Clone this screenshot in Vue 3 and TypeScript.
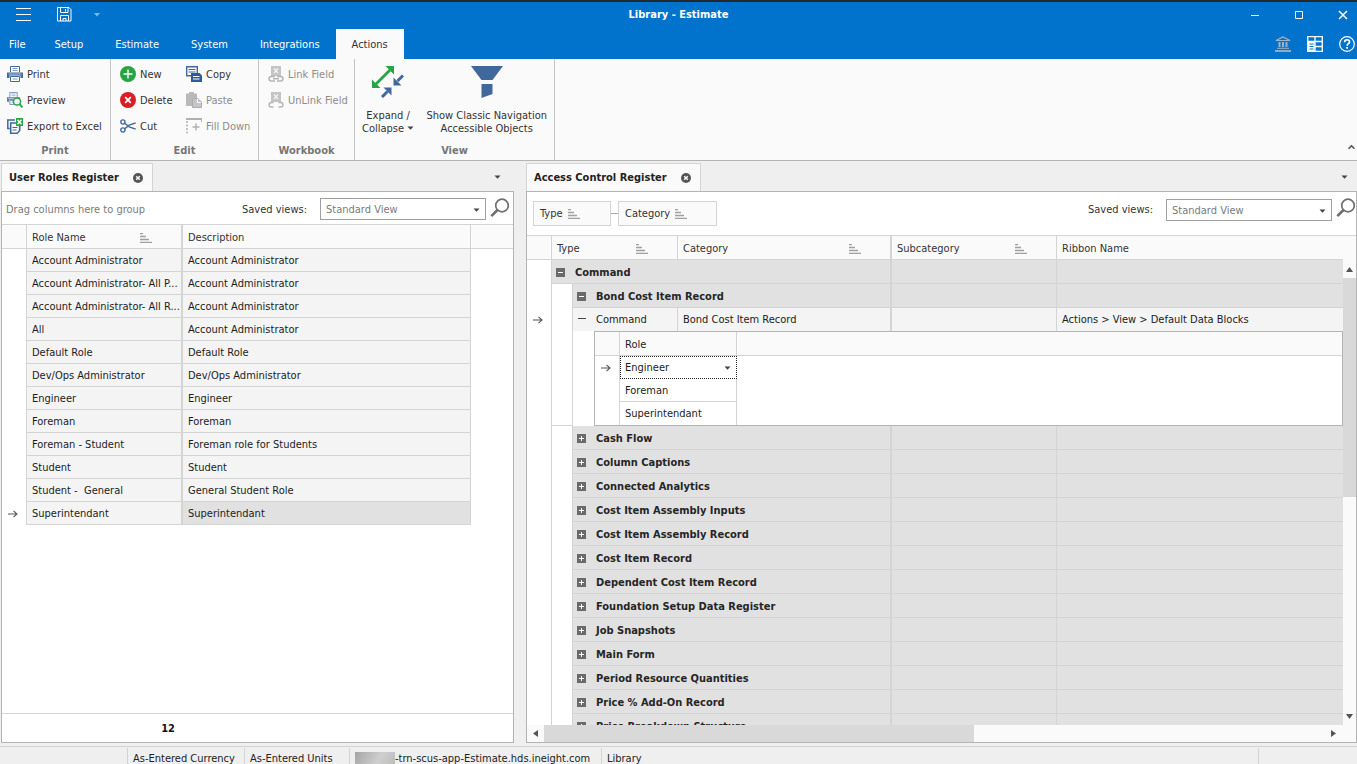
<script setup lang="ts">
import { ref } from 'vue'

interface Role {
  name: string
  description: string
}

const menuTabs: string[] = ['File', 'Setup', 'Estimate', 'System', 'Integrations', 'Actions']
const activeTab = ref('Actions')

const roles: Role[] = [
  { name: 'Account Administrator', description: 'Account Administrator' },
  { name: 'Account Administrator- All P...', description: 'Account Administrator' },
  { name: 'Account Administrator- All R...', description: 'Account Administrator' },
  { name: 'All', description: 'Account Administrator' },
  { name: 'Default Role', description: 'Default Role' },
  { name: 'Dev/Ops Administrator', description: 'Dev/Ops Administrator' },
  { name: 'Engineer', description: 'Engineer' },
  { name: 'Foreman', description: 'Foreman' },
  { name: 'Foreman - Student', description: 'Foreman role for Students' },
  { name: 'Student', description: 'Student' },
  { name: 'Student -  General', description: 'General Student Role' },
  { name: 'Superintendant', description: 'Superintendant' },
]
const selectedRole = ref('Superintendant')

const assignedRole = ref('Engineer')
const otherRoles: string[] = ['Foreman', 'Superintendant']

const categories: string[] = [
  'Cash Flow',
  'Column Captions',
  'Connected Analytics',
  'Cost Item Assembly Inputs',
  'Cost Item Assembly Record',
  'Cost Item Record',
  'Dependent Cost Item Record',
  'Foundation Setup Data Register',
  'Job Snapshots',
  'Main Form',
  'Period Resource Quantities',
  'Price % Add-On Record',
  'Price Breakdown Structure',
]
</script>

<template>
  <div class="app">
    <svg class="sprite" aria-hidden="true">
      <symbol id="caret" viewBox="0 0 7 4"><path d="M0.5 0.5h6L3.5 3.8z" fill="#444" /></symbol>
      <symbol id="sort" viewBox="0 0 12 10">
        <path d="M0 .5h3M0 3.5h6M0 6.5h9M0 9.5h12" stroke="#a0a0a0" stroke-width="1.4" fill="none" />
      </symbol>
      <symbol id="arrow" viewBox="0 0 10 8">
        <path d="M0 4h9M5.5 .8L9 4 5.5 7.2" stroke="#555" stroke-width="1.1" fill="none" />
      </symbol>
      <symbol id="close" viewBox="0 0 10 10">
        <circle cx="5" cy="5" r="5" fill="#555" />
        <path d="M3.2 3.2l3.6 3.6M6.8 3.2L3.2 6.8" stroke="#fff" stroke-width="1.4" />
      </symbol>
      <symbol id="find" viewBox="0 0 20 20">
        <circle cx="12" cy="7.5" r="6.3" fill="none" stroke="#6f6f6f" stroke-width="1.7" />
        <path d="M7.5 12L1.3 18.2" stroke="#6f6f6f" stroke-width="2.6" />
      </symbol>
      <symbol id="minus" viewBox="0 0 9 9">
        <rect width="9" height="9" fill="#6a6a6a" />
        <path d="M2 4.5h5" stroke="#fff" />
      </symbol>
      <symbol id="plus" viewBox="0 0 9 9">
        <rect width="9" height="9" fill="#6a6a6a" />
        <path d="M2 4.5h5M4.5 2v5" stroke="#fff" />
      </symbol>
      <symbol id="printer" viewBox="0 0 16 16">
        <path d="M3.500 6V.500h9V6" fill="#fff" stroke="#41689c" />
        <path d="M5.500 2.500h5M5.500 4.500h5" stroke="#7f9bc0" />
        <path d="M0 6.500h16v5.500h-2.500V9.500h-11V12H0z" fill="#41689c" />
        <path d="M1.500 8h13" stroke="#b5c6dc" />
        <path d="M3.500 10.500h9v5h-9z" fill="#fff" stroke="#41689c" />
        <path d="M5.500 13h5" stroke="#7f9bc0" />
      </symbol>
      <symbol id="field" viewBox="0 0 16 16">
        <path d="M3 0h10v10H3z" fill="#c4c4c4" />
        <path d="M6 2.5l4 4.5M10 2.5L6 7" stroke="#f4f4f4" stroke-width="1.3" />
      </symbol>
    </svg>

    <header class="top">
      <div class="titlebar">
        <div class="quick">
          <button class="bare" aria-label="Menu">
            <svg width="15" height="14" viewBox="0 0 15 14"><path d="M0 .5h15M0 6.500h15M0 12.500h15" stroke="#fff" /></svg>
          </button>
          <button class="bare save" aria-label="Save">
            <svg width="15" height="15" viewBox="0 0 15 15" fill="none" stroke="#fff">
              <path d="M.5.5h11.500l2 2v11.500H.5zM3.500.5v5h7.500v-5M8.500 2v2.500M3.500 14V8.500h8V14M6 14v-2.500h3V14" />
            </svg>
          </button>
          <button class="bare" aria-label="Customize">
            <svg width="6" height="4" viewBox="0 0 6 4"><path d="M0 0h6L3 3.5z" fill="#7fb8e4" /></svg>
          </button>
        </div>
        <h1>Library - Estimate</h1>
        <div class="window-buttons">
          <button class="bare" aria-label="Minimize"><svg width="10" height="10"><path d="M1 5.5h8" stroke="#fff" /></svg></button>
          <button class="bare" aria-label="Maximize"><svg width="10" height="10"><path d="M1.5 1.5h7v7h-7z" fill="none" stroke="#fff" /></svg></button>
          <button class="bare" aria-label="Close"><svg width="10" height="10"><path d="M1 1l8 8M9 1L1 9" stroke="#fff" stroke-width="1.5" /></svg></button>
        </div>
      </div>
      <div class="menubar">
        <nav class="menu">
          <button v-for="t in menuTabs" :key="t" class="menu-tab" :class="{ active: t === activeTab }" @click="activeTab = t">{{ t }}</button>
        </nav>
        <div class="menu-icons">
          <button class="bare" aria-label="Library">
            <svg width="16" height="16" viewBox="0 0 16 16">
              <path d="M8 .9L1 4.5h14z" fill="none" stroke="#9db4c6" stroke-width="1.2" />
              <path d="M4.5 6v5M8 6v5M11.5 6v5" stroke="#9db4c6" stroke-width="2" />
              <path d="M2 12.3h12" stroke="#9db4c6" /><path d="M0 15h16" stroke="#9db4c6" stroke-width="1.8" />
            </svg>
          </button>
          <button class="bare" aria-label="Grid">
            <svg width="16" height="16" viewBox="0 0 16 16">
              <path d="M.7.7h14.6v14.6H.7zM.7 5.5h14.6M.7 10.5h14.6M8 .7v14.6" fill="none" stroke="#fff" stroke-width="1.3" />
              <path d="M1 5h6.5v10.5H1z" fill="#fff" /><path d="M2.500 8h4M2.500 10.500h4M2.500 13h4" stroke="#0173cc" stroke-width="1.2" />
            </svg>
          </button>
          <button class="bare" aria-label="Help">
            <svg width="16" height="16" viewBox="0 0 16 16" fill="none" stroke="#fff">
              <circle cx="8" cy="8" r="7.3" stroke-width="1.2" />
              <path d="M5.6 6.2c0-3.2 4.9-3.2 4.9-.3 0 1.7-2.4 1.7-2.4 3.9" stroke-width="1.7" /><path d="M8.1 11v1.800" stroke-width="1.8" />
            </svg>
          </button>
        </div>
      </div>
    </header>

    <section class="ribbon">
      <div class="group print">
        <div class="columns">
          <div class="stack">
            <button class="cmd"><svg width="16" height="16"><use href="#printer" /></svg>Print</button>
            <button class="cmd">
              <svg width="16" height="16" viewBox="0 0 16 16">
                <g opacity=".85"><use href="#printer" width="13" height="13" /></g>
                <circle cx="10" cy="9.5" r="3.6" fill="#e9f3fb" stroke="#27a544" stroke-width="1.5" />
                <path d="M12.5 12.2l3 3.2" stroke="#27a544" stroke-width="1.8" />
              </svg>Preview
            </button>
            <button class="cmd">
              <svg width="16" height="16" viewBox="0 0 16 16">
                <path d="M8 2H.8v8.500h2" fill="none" stroke="#41689c" stroke-width="1.5" />
                <path d="M3.7 5h9v7.500l-2.500 2.700H3.700z" fill="#fff" stroke="#41689c" stroke-width="1.6" />
                <path d="M5.5 9.500h5M5.5 12h4" stroke="#41689c" />
                <path d="M9 0h7v8H9z" fill="#27a544" /><path d="M10.500 1.800l4 4.500M14.500 1.800l-4 4.500" stroke="#fff" stroke-width="1.3" />
              </svg>Export to Excel
            </button>
          </div>
        </div>
        <h2>Print</h2>
      </div>

      <div class="group edit">
        <div class="columns">
          <div class="stack first">
            <button class="cmd"><svg width="16" height="16" viewBox="0 0 16 16"><circle cx="8" cy="8" r="8" fill="#27a544" /><path d="M8 3.5v9M3.5 8h9" stroke="#fff" stroke-width="1.4" /></svg>New</button>
            <button class="cmd"><svg width="16" height="16" viewBox="0 0 16 16"><circle cx="8" cy="8" r="8" fill="#d91e27" /><path d="M5.2 5.2l5.6 5.6M10.8 5.2l-5.6 5.6" stroke="#fff" stroke-width="1.7" /></svg>Delete</button>
            <button class="cmd">
              <svg width="16" height="16" viewBox="0 0 16 16" fill="none" stroke="#41689c" stroke-width="1.4">
                <circle cx="2.900" cy="4" r="2.100" /><circle cx="2.900" cy="12" r="2.100" />
                <path d="M4.700 5.200l4.500 3.600 6.500 2.400M4.700 10.800l4.500-3.600 6.500-2.400" />
              </svg>Cut
            </button>
          </div>
          <div class="stack">
            <button class="cmd">
              <svg width="16" height="16" viewBox="0 0 16 16">
                <path d="M.7.7h10.600v9.100H.7z" fill="#fff" stroke="#41689c" stroke-width="1.4" />
                <path d="M2.5 3.5h7M2.5 6h7" stroke="#41689c" />
                <path d="M5 7h8.500l2.500 2.500V16H5z" fill="#2f5c98" /><path d="M7 10.5h6.500M7 13h6.500" stroke="#fff" />
              </svg>Copy
            </button>
            <button class="cmd" disabled>
              <svg width="16" height="16" viewBox="0 0 16 16">
                <path d="M0 1.500h3V0h5v1.500h3V6H6v8H0z" fill="#b9b9b9" />
                <path d="M6.500 6.500h5l4 3.500v5.500h-9z" fill="#c6c6c6" stroke="#aaa" /><path d="M11.500 7v3.500H15" stroke="#fff" fill="none" />
              </svg>Paste
            </button>
            <button class="cmd" disabled>
              <svg width="16" height="16" viewBox="0 0 16 16">
                <path d="M0 1h16" stroke="#b0b0b0" stroke-width="2" /><path d="M1 3v13" stroke="#b0b0b0" stroke-width="1.5" stroke-dasharray="2 1.5" />
                <path d="M10 5.500v7M6.500 9h7" stroke="#b0b0b0" stroke-width="1.4" /><path d="M15.500 1v3" stroke="#b0b0b0" />
              </svg>Fill Down
            </button>
          </div>
        </div>
        <h2>Edit</h2>
      </div>

      <div class="group workbook">
        <div class="columns">
          <div class="stack">
            <button class="cmd" disabled>
              <svg width="16" height="16" viewBox="0 0 16 16">
                <use href="#field" />
                <path d="M7 10.500H3.300a2.200 2.200 0 000 4.500H7M9 10.500h3.700a2.200 2.200 0 010 4.500H9M5 12.800h6" fill="none" stroke="#b4b4b4" stroke-width="1.5" />
              </svg>Link Field
            </button>
            <button class="cmd" disabled>
              <svg width="16" height="16" viewBox="0 0 16 16">
                <use href="#field" />
                <path d="M5.500 10.500H3.300a2.200 2.200 0 000 4.500h2.200M10.500 10.500h2.200a2.200 2.200 0 010 4.500h-2.200" fill="none" stroke="#b4b4b4" stroke-width="1.5" />
              </svg>UnLink Field
            </button>
          </div>
        </div>
        <h2>Workbook</h2>
      </div>

      <div class="group view">
        <div class="columns">
          <button class="big">
            <svg width="32" height="32" viewBox="0 0 32 32">
              <path d="M4 18L18 4" stroke="#27a544" stroke-width="2.8" />
              <path d="M22 0v8.500L13.500 0zM0 22v-8.500L8.500 22z" fill="#27a544" />
              <path d="M31 9.500l-5.500 5.500M10 31l5.500-5.500" stroke="#41689c" stroke-width="3" />
              <path d="M21.500 11.500v8h8zM19.500 21.500h-8l8 8z" fill="#41689c" />
            </svg>
            <span>Expand /<br />Collapse <svg class="caret" width="7" height="4"><use href="#caret" /></svg></span>
          </button>
          <button class="big">
            <svg width="32" height="32" viewBox="0 0 32 32">
              <path d="M0 0h32L21.500 14h-11zM10.500 18h11v10l-11 4z" fill="#41689c" />
            </svg>
            <span>Show Classic Navigation<br />Accessible Objects</span>
          </button>
        </div>
        <h2>View</h2>
      </div>
      <button class="bare collapse" aria-label="Collapse ribbon"><svg width="7" height="4" viewBox="0 0 7 4"><path d="M.5 3.800L3.500.700l3 3.100" fill="none" stroke="#555" stroke-width="1.5" /></svg></button>
    </section>

    <main class="workspace">
      <section class="pane">
        <div class="tabstrip">
          <div class="doc-tab">
            <h2>User Roles Register</h2>
            <button class="bare" aria-label="Close tab"><svg width="10" height="10"><use href="#close" /></svg></button>
          </div>
          <button class="bare strip-menu" aria-label="Tabs"><svg width="7" height="4"><use href="#caret" /></svg></button>
        </div>
        <div class="panel">
          <div class="toolbar">
            <span class="hint">Drag columns here to group</span>
            <label for="roles-view">Saved views:</label>
            <div class="combo">
              <select id="roles-view"><option>Standard View</option></select>
              <svg class="combo-caret" width="7" height="4"><use href="#caret" /></svg>
            </div>
            <button class="bare find" aria-label="Search roles"><svg width="20" height="20"><use href="#find" /></svg></button>
          </div>
          <div class="grid-body">
            <table class="roles">
              <colgroup><col class="c-ind" /><col class="c-name" /><col class="c-desc" /><col /></colgroup>
              <thead>
                <tr>
                  <th></th>
                  <th class="divide"><span class="head">Role Name<svg width="12" height="10"><use href="#sort" /></svg></span></th>
                  <th>Description</th>
                  <th class="last"></th>
                </tr>
              </thead>
              <tbody>
                <tr v-for="r in roles" :key="r.name" :class="{ selected: r.name === selectedRole }" @click="selectedRole = r.name">
                  <td class="ind"><svg v-if="r.name === selectedRole" width="10" height="8"><use href="#arrow" /></svg></td>
                  <td class="divide">{{ r.name }}</td>
                  <td class="desc">{{ r.description }}</td>
                  <td class="void"></td>
                </tr>
              </tbody>
            </table>
          </div>
          <footer class="summary"><strong>{{ roles.length }}</strong></footer>
        </div>
      </section>

      <section class="pane">
        <div class="tabstrip">
          <div class="doc-tab">
            <h2>Access Control Register</h2>
            <button class="bare" aria-label="Close tab"><svg width="10" height="10"><use href="#close" /></svg></button>
          </div>
          <button class="bare strip-menu edge" aria-label="Tabs"><svg width="7" height="4"><use href="#caret" /></svg></button>
        </div>
        <div class="panel">
          <div class="toolbar tall">
            <div class="chips">
              <button class="chip">Type<svg width="12" height="10"><use href="#sort" /></svg></button>
              <span class="joint"></span>
              <button class="chip wide">Category<svg width="12" height="10"><use href="#sort" /></svg></button>
            </div>
            <label for="access-view">Saved views:</label>
            <div class="combo">
              <select id="access-view"><option>Standard View</option></select>
              <svg class="combo-caret" width="7" height="4"><use href="#caret" /></svg>
            </div>
            <button class="bare find" aria-label="Search access"><svg width="20" height="20"><use href="#find" /></svg></button>
          </div>
          <div class="access-area">
            <div class="grid-body">
              <table class="access">
                <colgroup><col class="c-ind" /><col class="c-indent" /><col class="c-type" /><col class="c-cat" /><col class="c-sub" /><col /></colgroup>
                <thead>
                  <tr>
                    <th></th>
                    <th colspan="2"><span class="head">Type<svg width="12" height="10"><use href="#sort" /></svg></span></th>
                    <th class="divide"><span class="head">Category<svg width="12" height="10"><use href="#sort" /></svg></span></th>
                    <th><span class="head">Subcategory<svg width="12" height="10"><use href="#sort" /></svg></span></th>
                    <th class="last">Ribbon Name</th>
                  </tr>
                </thead>
                <tbody>
                  <tr class="grp">
                    <td class="ind"></td>
                    <td colspan="3" class="divide tree"><button class="node" aria-label="Collapse"><svg width="9" height="9"><use href="#minus" /></svg></button><strong>Command</strong></td>
                    <td></td><td class="last"></td>
                  </tr>
                  <tr class="grp">
                    <td class="ind"></td><td class="indent"></td>
                    <td colspan="2" class="divide tree"><button class="node" aria-label="Collapse"><svg width="9" height="9"><use href="#minus" /></svg></button><strong>Bond Cost Item Record</strong></td>
                    <td></td><td class="last"></td>
                  </tr>
                  <tr class="record">
                    <td class="ind"><svg width="10" height="8"><use href="#arrow" /></svg></td><td class="indent"></td>
                    <td class="tree"><button class="node" aria-label="Collapse"><svg width="9" height="9"><path d="M1 3.500h8" stroke="#444" /></svg></button>Command</td>
                    <td class="divide">Bond Cost Item Record</td>
                    <td></td><td class="last">Actions &gt; View &gt; Default Data Blocks</td>
                  </tr>
                  <tr>
                    <td class="ind"></td><td class="indent end"></td>
                    <td colspan="4" class="detail">
                      <table class="inner">
                        <colgroup><col class="c-ind" /><col class="c-role" /><col /></colgroup>
                        <thead><tr><th></th><th>Role</th><th class="last"></th></tr></thead>
                        <tbody>
                          <tr>
                            <td class="ind"><svg width="10" height="8"><use href="#arrow" /></svg></td>
                            <td class="focus">
                              <div class="role-combo">
                                <select v-model="assignedRole" aria-label="Role"><option>Engineer</option><option>Foreman</option><option>Superintendant</option></select>
                                <svg class="combo-caret" width="7" height="4"><use href="#caret" /></svg>
                              </div>
                            </td>
                            <td class="void"></td>
                          </tr>
                          <tr v-for="r in otherRoles" :key="r"><td class="ind"></td><td>{{ r }}</td><td class="void"></td></tr>
                        </tbody>
                      </table>
                    </td>
                  </tr>
                  <tr v-for="c in categories" :key="c" class="grp">
                    <td class="ind"></td><td class="indent"></td>
                    <td colspan="2" class="divide tree"><button class="node" aria-label="Expand"><svg width="9" height="9"><use href="#plus" /></svg></button><strong>{{ c }}</strong></td>
                    <td></td><td class="last"></td>
                  </tr>
                </tbody>
              </table>
            </div>
            <div class="vbar">
              <svg width="7" height="5"><path d="M0 5h7L3.500 0z" fill="#555" /></svg>
              <div class="vtrack"><div class="vthumb"></div></div>
              <svg width="7" height="5"><path d="M0 0h7L3.500 5z" fill="#555" /></svg>
            </div>
          </div>
          <div class="hbar">
            <svg width="5" height="7"><path d="M5 0v7L0 3.500z" fill="#555" /></svg>
            <div class="htrack"><div class="hthumb"></div></div>
            <svg width="5" height="7"><path d="M0 0v7l5-3.500z" fill="#555" /></svg>
          </div>
        </div>
      </section>
    </main>

    <footer class="status">
      <span class="s-empty"></span>
      <span class="s-currency">As-Entered Currency</span>
      <span class="s-units">As-Entered Units</span>
      <span class="s-host"><i class="redacted"></i>-trn-scus-app-Estimate.hds.ineight.com</span>
      <span class="s-lib">Library</span>
      <span class="s-end"></span>
    </footer>
  </div>
</template>

<style>
html,
body {
  margin: 0;
  background: #efefef;
}
</style>

<style scoped>
.app {
  display: flex;
  flex-direction: column;
  height: 100vh;
  overflow: hidden;
  background: #efefef;
  color: #333;
  font: 11px/13px 'DejaVu Sans Condensed', 'Noto Sans', sans-serif;
}
.app * { box-sizing: border-box; }
.sprite { position: absolute; width: 0; height: 0; }
svg { display: block; flex: none; }
h1, h2 { margin: 0; font-size: 11px; line-height: 13px; font-weight: bold; }
button, select { font: inherit; color: inherit; }
button { white-space: nowrap; }
.bare { display: block; padding: 0; border: 0; background: none; }

.top { flex: none; background: #0173cc; border-top: 2px solid #202a33; color: #fff; }
.titlebar { display: grid; grid-template-columns: 1fr auto 1fr; align-items: center; height: 25px; }
.quick { display: flex; align-items: center; padding-left: 16px; }
.save { margin: 0 22px 0 26px; }
.window-buttons { display: flex; justify-content: flex-end; gap: 34px; padding-right: 9px; }
.menubar { display: flex; justify-content: space-between; height: 32px; }
.menu { display: flex; align-items: flex-end; }
.menu-tab { height: 30px; padding: 0 16px; border: 0; background: none; }
.menu-tab:first-child { padding: 0 13px 0 9px; }
.menu-tab.active { background: #fafafa; color: #333; }
.menu-icons { display: flex; align-items: center; gap: 16px; padding: 2px 2px 0 0; }

.ribbon { position: relative; display: flex; flex: none; height: 102px; background: #fafafa; border-bottom: 1px solid #b4b4b4; }
.group { display: flex; flex-direction: column; justify-content: space-between; border-right: 1px solid #c4c4c4; padding-bottom: 3px; }
.group h2 { text-align: center; color: #777; }
.columns { display: flex; padding: 2px 0 0 7px; }
.print { width: 111px; }
.edit { width: 148px; }
.workbook { width: 96px; }
.view { width: 200px; }
.edit .columns, .workbook .columns { padding-left: 9px; }
.view .columns { padding: 7px 4px 0; justify-content: space-between; }
.stack.first { width: 66px; }
.cmd { display: flex; align-items: center; gap: 4px; height: 26px; padding: 0; border: 0; background: none; }
.cmd:disabled { color: #8c8c8c; }
.big { display: flex; flex-direction: column; align-items: center; gap: 11px; padding: 0 3px; border: 0; background: none; }
.caret { display: inline-block; vertical-align: 2px; }
.collapse { position: absolute; right: 2px; bottom: 11px; }

.workspace { display: grid; grid-template-columns: minmax(0, 513fr) minmax(0, 831fr); gap: 12px; flex: 1; min-height: 0; padding: 2px 0 3px 1px; }
.pane { display: flex; flex-direction: column; min-height: 0; }
.tabstrip { display: flex; justify-content: space-between; flex: none; height: 28px; }
.doc-tab { display: flex; align-items: center; gap: 14px; padding: 0 9px 0 7px; background: #fafafa; border: 1px solid #d4d4d4; border-bottom: 0; color: #222; }
.strip-menu { padding: 0 13px; }
.strip-menu.edge { padding-right: 9px; }
.panel { display: flex; flex-direction: column; flex: 1; min-height: 0; background: #fff; border: 1px solid #b4b4b4; }
.toolbar { display: flex; align-items: center; flex: none; height: 33px; padding: 2px 3px 0 4px; border-bottom: 1px solid #d4d4d4; }
.toolbar.tall { align-items: flex-start; height: 44px; padding: 6px 0 0 6px; }
.toolbar label { margin-left: auto; padding-right: 13px; white-space: nowrap; }
.tall label { line-height: 24px; }
.hint { color: #7b7b7b; white-space: nowrap; }
.combo { position: relative; width: 166px; height: 22px; margin-right: 4px; border: 1px solid #a0a0a0; background: #fff; }
.tall .combo { margin-top: 1px; }
.combo select, .role-combo select { display: block; width: 100%; height: 100%; padding: 0 5px; border: 0; appearance: none; background: none; outline: 0; }
.combo select { color: #7b7b7b; }
.combo-caret { position: absolute; right: 5px; top: 9px; pointer-events: none; }
.find { margin-bottom: 2px; }

.chips { display: flex; align-items: center; padding-top: 3px; }
.joint { width: 7px; height: 1px; background: #aaa; }
.chip { display: flex; align-items: center; gap: 5px; width: 78px; height: 25px; padding: 0 6px; border: 1px solid #d4d4d4; background: #fafafa; }
.chip.wide { width: 99px; }

.grid-body { flex: 1; min-height: 0; min-width: 0; overflow: hidden; }
table { width: 100%; table-layout: fixed; border-collapse: separate; border-spacing: 0; }
.c-ind { width: 25px; }
.c-name { width: 156px; }
.c-desc { width: 288px; }
.c-indent { width: 21px; }
.c-type { width: 105px; }
.c-cat { width: 214px; }
.c-sub { width: 165px; }
.c-role { width: 117px; }
th, td { height: 23px; padding: 0 0 0 5px; border-right: 1px solid #d4d4d4; border-bottom: 1px solid #d4d4d4; text-align: left; font-weight: normal; white-space: pre; overflow: hidden; text-overflow: ellipsis; }
th { height: 24px; padding-top: 2px; background: #fafafa; }
td { background: #f4f4f4; color: #1c1c1c; }
.divide { border-right-width: 2px; }
.head { display: flex; align-items: center; justify-content: space-between; padding-right: 29px; }
td.ind { padding: 0 0 0 6px; background: #fff; border-bottom: 0; }
td.void { background: #fff; border: 0; }
.last { border-right: 0; }
.selected .desc { background: #e1e1e1; }
.summary { flex: none; height: 29px; padding-right: 338px; border-top: 1px solid #d4d4d4; line-height: 30px; text-align: right; color: #111; }

.access-area { display: flex; flex: 1; min-height: 0; }
.grp td { height: 24px; padding-top: 2px; background: #e1e1e1; color: #262626; }
.grp td.ind, .grp td.indent, td.indent { background: #fff; border-bottom: 0; }
td.indent.end { border-bottom: 1px solid #d4d4d4; }
td.tree { padding-left: 4px; }
.node { display: inline-block; padding: 0; margin-right: 10px; border: 0; background: none; vertical-align: -1px; }
.record td { border-bottom: 0; }
td.detail { height: auto; padding: 0 0 0 21px; border: 0; background: #fff; }
.inner { border: 1px solid #b4b4b4; }
.inner td { background: #fff; }
.inner tr:last-child td { border-bottom: 0; }
.inner td.focus { padding: 0; border: 1px dotted #222; }
.role-combo { position: relative; height: 21px; }
.role-combo select { padding: 0 4px; }

.vbar { display: flex; flex-direction: column; align-items: center; gap: 6px; width: 13px; padding: 31px 0 6px; background: #fafafa; }
.vtrack { flex: 1; width: 13px; }
.vthumb { height: 51%; background: #d9d9d9; }
.hbar { display: flex; align-items: center; gap: 6px; flex: none; height: 17px; padding: 0 20px 0 6px; background: #fafafa; }
.htrack { flex: 1; height: 17px; }
.hthumb { width: 55%; height: 17px; background: #d9d9d9; }

.status { display: flex; flex: none; height: 18px; border-top: 1px solid #d4d4d4; padding-top: 1px; line-height: 22px; white-space: nowrap; color: #222; }
.status span { border-right: 1px solid #d4d4d4; padding-left: 5px; }
.s-empty { width: 128px; }
.s-currency { width: 117px; }
.s-units { width: 105px; }
.s-host { display: flex; width: 252px; }
.s-lib { flex: 1; }
.status .s-end { width: 98px; border: 0; }
.redacted { width: 40px; height: 13px; margin-top: 4px; background: linear-gradient(120deg, #a5a5a5, #cfcfcf 60%, #bbb); }
</style>
